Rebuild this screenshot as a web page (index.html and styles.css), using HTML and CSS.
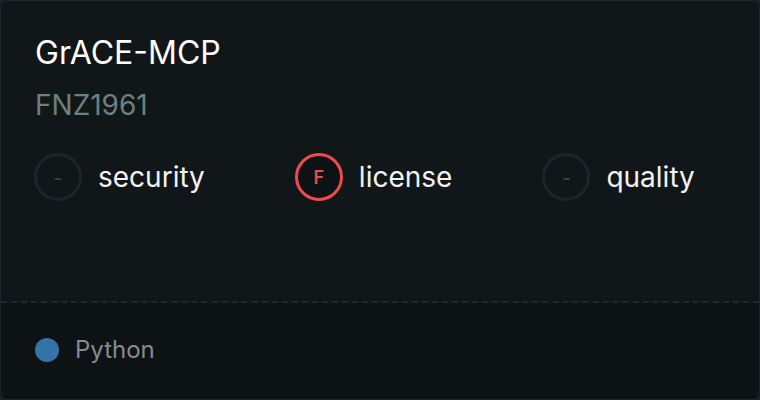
FILE: index.html
```html
<!DOCTYPE html>
<html>
<head>
<meta charset="utf-8">
<link rel="stylesheet" href="styles.css">
</head>
<body>
<div class="card">
  <div class="main">
    <div class="title">GrACE-MCP</div>
    <div class="owner">FNZ1961</div>
    <div class="scores">
      <div class="score">
        <div class="ring">-</div>
        <div class="label">security</div>
      </div>
      <div class="score">
        <div class="ring bad">F</div>
        <div class="label">license</div>
      </div>
      <div class="score">
        <div class="ring">-</div>
        <div class="label">quality</div>
      </div>
    </div>
  </div>
  <div class="footer">
    <span class="dot"></span>
    <span class="lang">Python</span>
  </div>
</div>
</body>
</html>
```

FILE: styles.css
```css
html, body {
  margin: 0;
  padding: 0;
  background: #1b2124;
}
body {
  width: 760px;
  height: 400px;
  font-family: Inter, "Noto Sans", sans-serif;
}
.card {
  box-sizing: border-box;
  width: 760px;
  height: 400px;
  border: 1px solid #1f2629;
  border-radius: 7px;
  overflow: hidden;
  background: #111719;
  display: flex;
  flex-direction: column;
}
.main {
  height: 302px;
  box-sizing: border-box;
  padding: 32px 34px 0 33px;
  border-bottom: 2px dashed #20282b;
}
.title {
  font-size: 32px;
  line-height: 40px;
  color: #ffffff;
  padding-left: 1px;
}
.owner {
  margin-top: 15px;
  font-size: 28px;
  line-height: 34px;
  color: #6a817d;
  padding-left: 1px;
}
.scores {
  margin-top: 31px;
  display: flex;
  gap: 90px;
}
.score {
  display: flex;
  align-items: center;
  gap: 16px;
}
.ring {
  box-sizing: border-box;
  width: 48px;
  height: 48px;
  border-radius: 50%;
  border: 3px solid #1e2427;
  display: flex;
  align-items: center;
  justify-content: center;
  font-size: 18px;
  color: #3a4245;
  font-weight: 600;
}
.ring.bad {
  border-color: #f04a4c;
  color: #f04a4c;
  background: #0d1214;
}
.label {
  font-size: 28px;
  color: #f2f2f2;
}
.footer {
  flex: 1;
  background: #0d1215;
  display: flex;
  align-items: center;
  padding-left: 34px;
  padding-bottom: 3px;
  gap: 16px;
}
.dot {
  width: 24px;
  height: 24px;
  border-radius: 50%;
  background: #3572a5;
}
.lang {
  font-size: 24px;
  color: #878b8e;
}
```
